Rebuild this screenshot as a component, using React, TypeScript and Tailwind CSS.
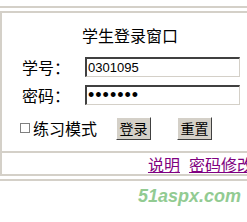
import React from 'react';

const cjk = { fontFamily: '"Noto Sans CJK SC", "Noto Sans", sans-serif' };

export default function App() {
    return (
        <div className="w-[247px] h-[222px] overflow-hidden bg-white" style={cjk}>
            {/* top rule */}
            <div className="h-[6px]" />
            <div className="h-[2px] w-[260px] bg-[#d4d0c8]" />
            <div className="h-[3px]" />

            {/* login box */}
            <div className="w-[256px] border-l-2 border-t-2 border-b-2 border-[#d4d0c8] bg-white">
                <div className="pt-[12px] h-[34px] text-center text-[16px] leading-[20px] text-black pl-[2px]">
                    学生登录窗口
                </div>

                <div className="mt-[10px] flex items-center pl-[20px] h-[20px]">
                    <span className="w-[63px] text-[16px] leading-[20px] text-black">学号：</span>
                    <input
                        readOnly
                        defaultValue="0301095"
                        className="w-[155px] h-[20px] border-t-2 border-l-2 border-r border-b border-t-[#404040] border-l-[#404040] border-r-[#d4d0c8] border-b-[#d4d0c8] bg-white px-[1px] text-[13px] text-black outline-none"
                        style={{ fontFamily: '"Liberation Sans", Arial, sans-serif' }}
                    />
                </div>

                <div className="mt-[8px] flex items-center pl-[20px] h-[20px]">
                    <span className="w-[63px] text-[16px] leading-[20px] text-black">密码：</span>
                    <input
                        readOnly
                        type="password"
                        defaultValue="1234567"
                        className="w-[155px] h-[20px] border-t-2 border-l-2 border-r border-b border-t-[#404040] border-l-[#404040] border-r-[#d4d0c8] border-b-[#d4d0c8] bg-white px-[1px] text-[18px] tracking-[1px] text-black outline-none"
                        style={{ fontFamily: '"Liberation Sans", Arial, sans-serif' }}
                    />
                </div>

                <div className="mt-[12px] flex items-center h-[22px] pl-[18px]">
                    <span className="w-[10px] h-[10px] border border-[#808080] bg-white mr-[3px]" />
                    <span className="text-[16px] leading-[20px] text-black">练习模式</span>
                    <button className="ml-[19px] w-[35px] h-[23px] bg-[#d4d0c8] border border-t-white border-l-white border-r-[#404040] border-b-[#404040] text-[14px] leading-[18px] text-black">
                        登录
                    </button>
                    <button className="ml-[26px] w-[35px] h-[23px] bg-[#d4d0c8] border border-t-white border-l-white border-r-[#404040] border-b-[#404040] text-[14px] leading-[18px] text-black">
                        重置
                    </button>
                </div>

                <div className="mt-[12px] h-[2px] bg-[#d4d0c8]" />

                <div className="h-[21px] flex items-center justify-end gap-[9px] pr-[3px] text-[16px] leading-[20px] text-[#800080]">
                    <a className="underline">说明</a>
                    <a className="underline">密码修改</a>
                </div>
            </div>

            <div className="h-[3px]" />
            <div className="h-[2px] w-[260px] bg-[#d4d0c8]" />

            {/* watermark */}
            <div
                className="pl-[138px] pt-[5px] text-[18px] leading-[20px] font-bold italic text-[#92cb92]"
                style={{ fontFamily: '"Liberation Sans", Arial, sans-serif' }}
            >
                51aspx.com
            </div>
        </div>
    );
}
